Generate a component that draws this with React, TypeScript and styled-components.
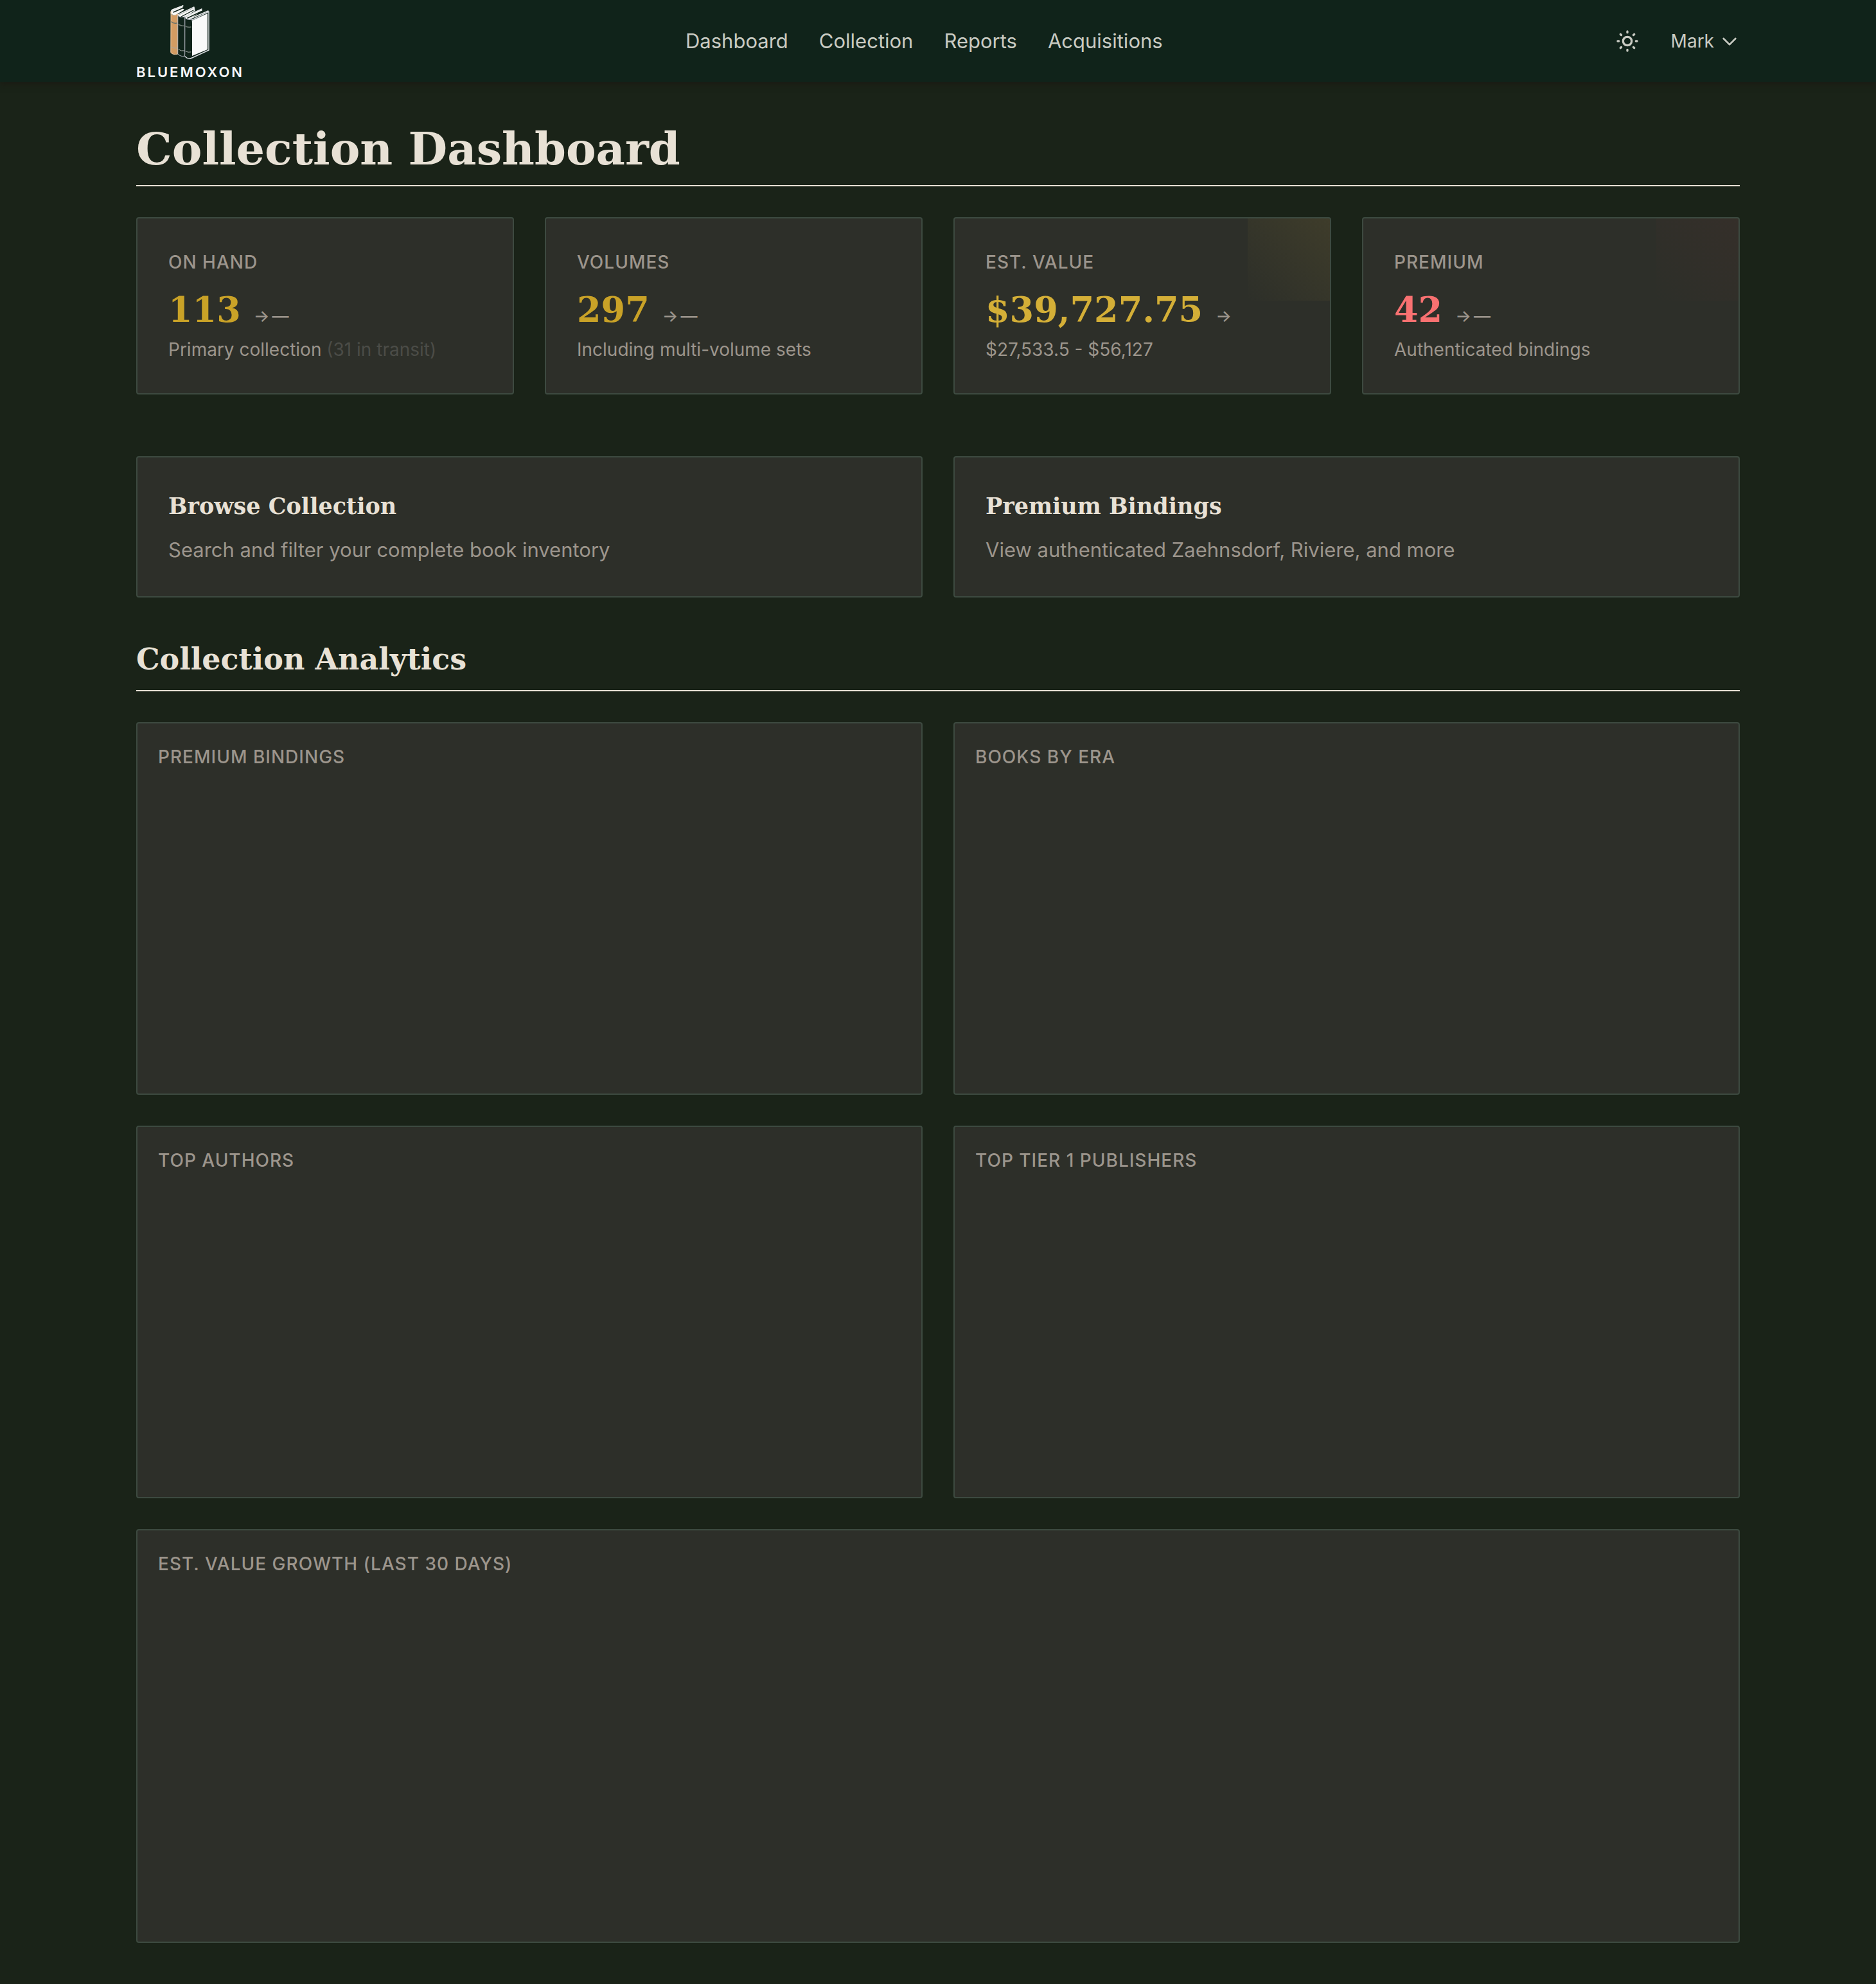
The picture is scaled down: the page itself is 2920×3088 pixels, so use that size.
import React from "react";
import styled, { createGlobalStyle } from "styled-components";

const sans = `Inter, "Liberation Sans", sans-serif`;
const serif = `"DejaVu Serif", "Liberation Serif", serif`;

const color = {
  page: "#1a2318",
  header: "#10231a",
  panel: "#2d2f29",
  line: "#3d4a40",
  cream: "#e8e1d5",
  muted: "#9c958c",
  faint: "#4b4c47",
  nav: "#c9cbc3",
  gold: "#c9a227",
  brightGold: "#d4af37",
  rose: "#f87171",
};

const GlobalStyle = createGlobalStyle`
  *, *::before, *::after { box-sizing: border-box; }
  body { margin: 0; background: ${color.page}; color: ${color.cream}; font-family: ${sans}; }
  h1, h2, h3, p { margin: 0; }
  a { color: inherit; text-decoration: none; }
`;

const Header = styled.header`
  background: ${color.header};
  box-shadow: 0 4px 8px rgba(28, 22, 16, 0.5);
`;

const Bar = styled.div`
  display: flex;
  align-items: center;
  justify-content: space-between;
  max-width: 2560px;
  height: 128px;
  margin: 0 auto;
  padding: 0 32px;
`;

const Brand = styled.a`
  display: flex;
  flex-direction: column;
  align-items: center;
  gap: 8px;
  width: 168px;
`;

const BrandMark = styled.svg`
  display: block;
  flex: none;
  width: 64px;
  height: 88px;
`;

const BrandName = styled.span`
  color: #f8f8f8;
  font-size: 22px;
  font-weight: 600;
  line-height: 24px;
  letter-spacing: 3px;
`;

const Nav = styled.nav`
  display: flex;
  gap: 48px;
  color: ${color.nav};
  font-size: 31px;
  line-height: 48px;
`;

const Tools = styled.div`
  display: flex;
  align-items: center;
  gap: 32px;
`;

const ToolButton = styled.button`
  display: flex;
  align-items: center;
  gap: 8px;
  padding: 0;
  border: 0;
  background: none;
  color: ${color.nav};
  font-family: ${sans};
  font-size: 28px;
  line-height: 40px;
  cursor: pointer;
`;

const IconButton = styled(ToolButton)`
  padding: 16px;
`;

const Icon = styled.svg<{ $size: number }>`
  display: block;
  flex: none;
  width: ${(p) => p.$size}px;
  height: ${(p) => p.$size}px;
  fill: none;
  stroke: currentColor;
  stroke-width: 2;
  stroke-linecap: round;
  stroke-linejoin: round;
`;

const Main = styled.main`
  max-width: 2560px;
  margin: 0 auto;
  padding: 64px 32px;
`;

const PageTitle = styled.h1`
  padding-bottom: 16px;
  border-bottom: 2px solid ${color.cream};
  font: 700 70px/80px ${serif};
`;

const SectionTitle = styled.h2`
  margin-top: 64px;
  padding-bottom: 16px;
  border-bottom: 2px solid ${color.cream};
  font: 700 46px/64px ${serif};
`;

const Grid = styled.div<{ $columns: number; $top: number }>`
  display: grid;
  grid-template-columns: repeat(${(p) => p.$columns}, minmax(0, 1fr));
  gap: 48px;
  margin-top: ${(p) => p.$top}px;
`;

const Card = styled.article`
  border: 2px solid ${color.line};
  border-radius: 4px;
  background: ${color.panel};
`;

const StatBox = styled(Card)<{ $glow: string }>`
  padding: 48px;
  background:
    linear-gradient(45deg, transparent, ${(p) => p.$glow}) top right / 128px 128px no-repeat,
    ${color.panel};
`;

const Label = styled.h3`
  color: ${color.muted};
  font-size: 28px;
  font-weight: 500;
  line-height: 40px;
  letter-spacing: 1px;
  text-transform: uppercase;
`;

const ValueRow = styled.div`
  display: flex;
  align-items: baseline;
  gap: 20px;
  margin-top: 16px;
`;

const Value = styled.strong<{ $tone: string }>`
  color: ${(p) => p.$tone};
  font: 700 54px/76px ${serif};
`;

const Trend = styled.span`
  display: flex;
  gap: 4px;
  color: ${color.muted};
  font-size: 26px;
  font-weight: 500;
  line-height: 40px;
`;

const Note = styled.p`
  margin-top: 4px;
  color: ${color.muted};
  font-size: 28px;
  line-height: 40px;
`;

const Pending = styled.span`
  color: ${color.faint};
`;

const LinkCard = styled(Card)`
  padding: 48px;
`;

const LinkTitle = styled.h3`
  font: 700 35px/56px ${serif};
`;

const LinkText = styled.p`
  margin-top: 16px;
  color: ${color.muted};
  font-size: 31px;
  line-height: 48px;
`;

const ChartCard = styled(Card)<{ $wide?: boolean }>`
  grid-column: ${(p) => (p.$wide ? "1 / -1" : "auto")};
  padding: 32px;
`;

const ChartArea = styled.div<{ $height: number }>`
  height: ${(p) => p.$height}px;
  margin-top: 24px;
`;

const stats = [
  { label: "On Hand", value: "113", tone: color.gold, glow: "transparent", dash: true, note: "Primary collection", pending: "(31 in transit)" },
  { label: "Volumes", value: "297", tone: color.gold, glow: "transparent", dash: true, note: "Including multi-volume sets" },
  { label: "Est. Value", value: "$39,727.75", tone: color.brightGold, glow: "rgba(212, 175, 55, 0.1)", dash: false, note: "$27,533.5 - $56,127" },
  { label: "Premium", value: "42", tone: color.rose, glow: "rgba(114, 47, 45, 0.11)", dash: true, note: "Authenticated bindings" },
];

const links = [
  { title: "Browse Collection", text: "Search and filter your complete book inventory" },
  { title: "Premium Bindings", text: "View authenticated Zaehnsdorf, Riviere, and more" },
];

const charts = ["Premium Bindings", "Books by Era", "Top Authors", "Top Tier 1 Publishers"];

const Books = () => (
  <BrandMark viewBox="0 0 64 88" aria-hidden="true">
    <g strokeLinejoin="round" strokeLinecap="round">
      <path d="M2 13 Q2 11 5 10 L21 4 L20 9 L23 11 L10 19 Q3 20 2 16Z" fill="#f7f7f5" />
      <path d="M13 20 L38 8 L39 13 L23 23 Q15 25 13 21Z" fill="#f7f7f5" />
      <path d="M24 23 L49 10 L51 12 L33 25 Q26 26 24 24Z" fill="#f7f7f5" />
      <path d="M3 13 L21 5 M13 19 L38 7 L39 13 M24 22 L50 10 M30 26 L60 13" stroke="#e4e7e7" strokeWidth="1.4" fill="none" />
      <path d="M6 15 L22 8 M18 22 L37 12 M28 24 L49 14" stroke="#10231a" strokeWidth="1.4" fill="none" />
      <path d="M2 14 Q1 20 7 20 L13 18 V80 Q5 82 2 78Z" fill="#d39c63" stroke="#e9c9a4" strokeWidth="1" />
      <path d="M13 20 Q15 24 24 22 V83 Q17 85 13 80Z" fill="#10231a" stroke="#aeb2bb" strokeWidth="1" />
      <path d="M24 23 Q26 28 35 26 V86 Q29 89 24 83Z" fill="#10231a" stroke="#aeb2bb" strokeWidth="1" />
      <path d="M35 27 L61 14 V74 L35 86 Q29 89 24 84" fill="#10231a" stroke="#d7dade" strokeWidth="1.4" />
      <path d="M35 28 L59 17 V73 L35 83Z" fill="#f9f9f9" />
      <path d="M3 30 Q6 33 11 32 M14 34 Q18 37 23 36 M25 37 Q29 39 33 38" stroke="#68736c" strokeWidth="1.6" fill="none" />
      <path d="M3 69 Q7 72 11 71 M14 73 Q18 76 23 75 M25 76 Q29 78 33 77" stroke="#a5aaa6" strokeWidth="1" fill="none" />
    </g>
  </BrandMark>
);

export default function App() {
  return (
    <>
      <GlobalStyle />
      <Header>
        <Bar>
          <Brand href="#">
            <Books />
            <BrandName>BLUEMOXON</BrandName>
          </Brand>
          <Nav>
            <a href="#dashboard">Dashboard</a>
            <a href="#collection">Collection</a>
            <a href="#reports">Reports</a>
            <a href="#acquisitions">Acquisitions</a>
          </Nav>
          <Tools>
            <IconButton type="button" aria-label="Toggle theme">
              <Icon $size={40} viewBox="0 0 24 24">
                <circle cx="12" cy="12" r="4" />
                <path d="M12 3v1M12 20v1M3 12h1M20 12h1M5.6 5.6l.7.7M17.7 17.7l.7.7M5.6 18.4l.7-.7M17.7 6.3l.7-.7" />
              </Icon>
            </IconButton>
            <ToolButton type="button">
              Mark
              <Icon $size={32} viewBox="0 0 24 24">
                <path d="M19 9l-7 7-7-7" />
              </Icon>
            </ToolButton>
          </Tools>
        </Bar>
      </Header>
      <Main>
        <PageTitle>Collection Dashboard</PageTitle>
        <Grid $columns={4} $top={48}>
          {stats.map((s) => (
            <StatBox key={s.label} $glow={s.glow}>
              <Label>{s.label}</Label>
              <ValueRow>
                <Value $tone={s.tone}>{s.value}</Value>
                <Trend>
                  <span>→</span>
                  {s.dash && <span>—</span>}
                </Trend>
              </ValueRow>
              <Note>
                {s.note}
                {s.pending && <Pending> {s.pending}</Pending>}
              </Note>
            </StatBox>
          ))}
        </Grid>
        <Grid $columns={2} $top={96}>
          {links.map((l) => (
            <a key={l.title} href="#collection">
              <LinkCard>
                <LinkTitle>{l.title}</LinkTitle>
                <LinkText>{l.text}</LinkText>
              </LinkCard>
            </a>
          ))}
        </Grid>
        <SectionTitle>Collection Analytics</SectionTitle>
        <Grid $columns={2} $top={48}>
          {charts.map((c) => (
            <ChartCard key={c}>
              <Label>{c}</Label>
              <ChartArea $height={448} />
            </ChartCard>
          ))}
          <ChartCard $wide>
            <Label>Est. Value Growth (Last 30 Days)</Label>
            <ChartArea $height={512} />
          </ChartCard>
        </Grid>
      </Main>
    </>
  );
}
